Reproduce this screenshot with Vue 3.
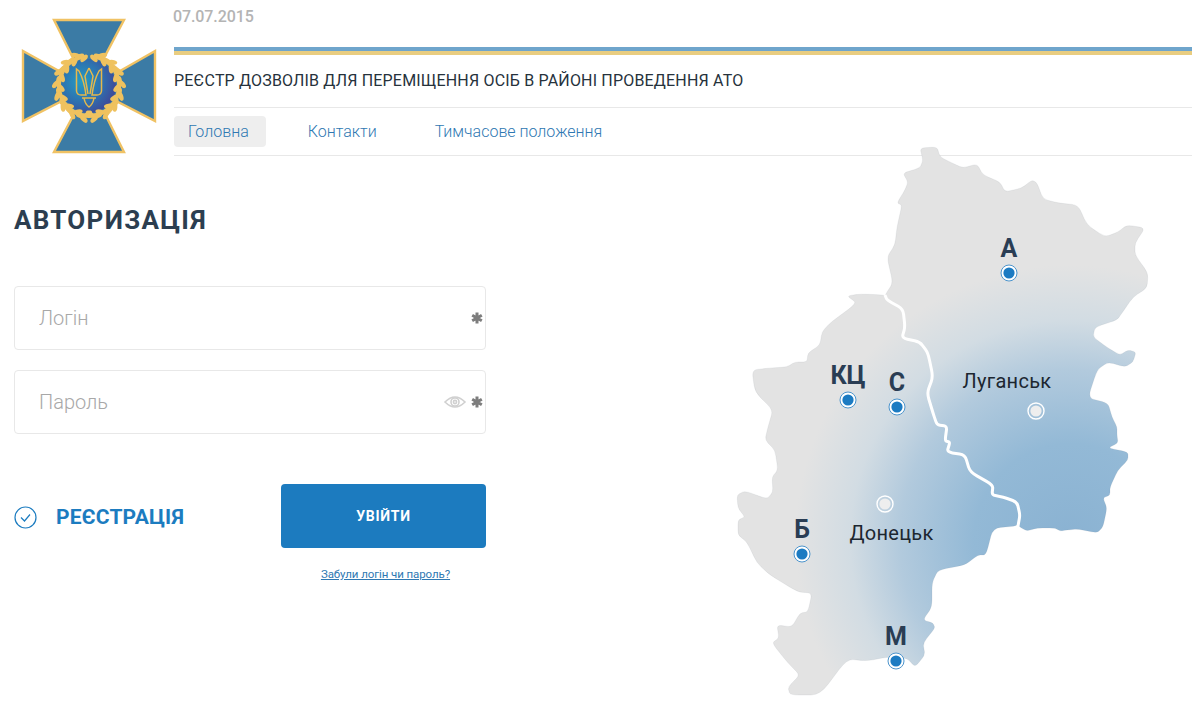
<template>
  <div class="page">
    <header class="top">
      <svg class="logo" viewBox="0 0 174 156" width="174" height="156">
        <defs>
          <radialGradient id="seal" cx="36%" cy="42%" r="72%">
            <stop offset="0" stop-color="#249dc4" />
            <stop offset="0.55" stop-color="#2f6fae" />
            <stop offset="1" stop-color="#433f93" />
          </radialGradient>
        </defs>
        <path class="cross" d="M54 20H124L104 58L120 71L155 51V121L118 102L106 116L124 152H54L73 116L60 102L23 121V51L59 71L73 58Z" />
        <circle cx="89" cy="86" r="27" fill="url(#seal)" />
        <path class="wreath-base" d="M96 56.8A30 30 0 1 1 82 56.8" />
        <ellipse
          v-for="(leaf, i) in wreath"
          :key="i"
          class="leaf"
          :cx="leaf.x"
          :cy="leaf.y"
          rx="4.6"
          ry="2.4"
          :transform="`rotate(${leaf.r} ${leaf.x} ${leaf.y})`"
        />
        <g class="trident">
          <path d="M89 68L85 76L88 94M89 68L93 76L90 94" />
          <path d="M76.5 69L79 71Q84 80 86 95H81Q77 95 76.5 91ZM101.5 69L99 71Q94 80 92 95H97Q101 95 101.5 91Z" />
          <path d="M82 98H96M84 98Q85 104 89 107Q93 104 94 98" />
        </g>
      </svg>
      <div class="top-right">
        <div class="date">07.07.2015</div>
        <div class="stripe"></div>
        <div class="title">РЕЄСТР ДОЗВОЛІВ ДЛЯ ПЕРЕМІЩЕННЯ ОСІБ В РАЙОНІ ПРОВЕДЕННЯ АТО</div>
        <nav class="nav">
          <a class="nav-item active">Головна</a>
          <a class="nav-item">Контакти</a>
          <a class="nav-item">Тимчасове положення</a>
        </nav>
      </div>
    </header>

    <main class="login">
      <h1 class="heading">АВТОРИЗАЦІЯ</h1>
      <div class="fields">
        <label class="field">
          <input type="text" placeholder="Логін" />
          <svg class="star" viewBox="0 0 12 12" width="12" height="12">
            <path d="M6 0.5V11.5M1.2 3.2L10.8 8.8M10.8 3.2L1.2 8.8" />
          </svg>
        </label>
        <label class="field">
          <input type="password" placeholder="Пароль" />
          <svg class="eye" viewBox="0 0 22 14" width="22" height="14">
            <path d="M1 7Q11 -3 21 7Q11 17 1 7Z" />
            <circle cx="11" cy="7" r="4" />
            <circle cx="11" cy="7" r="1.6" />
          </svg>
          <svg class="star" viewBox="0 0 12 12" width="12" height="12">
            <path d="M6 0.5V11.5M1.2 3.2L10.8 8.8M10.8 3.2L1.2 8.8" />
          </svg>
        </label>
      </div>
      <div class="actions">
        <a class="register">
          <svg viewBox="0 0 23 23" width="23" height="23">
            <circle cx="11.5" cy="11.5" r="10.5" />
            <path d="M7 11.5L10.5 15L16 8.5" />
          </svg>
          <span>РЕЄСТРАЦІЯ</span>
        </a>
        <button class="submit" type="button">УВІЙТИ</button>
        <a class="forgot">Забули логін чи пароль?</a>
      </div>
    </main>

    <svg class="map" viewBox="720 140 472 574" width="472" height="574">
      <defs>
        <radialGradient id="shade" gradientUnits="userSpaceOnUse" cx="1070" cy="540" r="275">
          <stop offset="0" stop-color="#8ab2d2" />
          <stop offset="0.35" stop-color="#93b9d6" />
          <stop offset="0.62" stop-color="#b2cadd" />
          <stop offset="0.8" stop-color="#d2dce3" />
          <stop offset="1" stop-color="#e3e3e3" />
        </radialGradient>
      </defs>
      <path class="region" :d="luhansk" />
      <path class="region" :d="donetsk" />
      <path class="border" :d="borderLine" />

      <g v-for="pin in pins" :key="pin.label">
        <circle class="pin-ring" :class="{ city: pin.city }" :cx="pin.x" :cy="pin.y" r="8" />
        <circle class="pin-dot" :class="{ city: pin.city }" :cx="pin.x" :cy="pin.y" r="5.6" />
      </g>
      <text
        v-for="pin in pins"
        :key="'t' + pin.label"
        :class="pin.city ? 'city-name' : 'pin-name'"
        :x="pin.tx"
        :y="pin.ty"
      >{{ pin.label }}</text>
    </svg>
  </div>
</template>

<script setup>
// leaves of the wreath round the seal, open at the top
const wreath = []
for (let side = -1; side <= 1; side += 2) {
  let row = 0
  for (let a = 10; a <= 180; a += 7) {
    const rad = (a * Math.PI) / 180
    const radius = [28, 31, 33.5][row % 3]
    wreath.push({
      x: +(89 + side * radius * Math.sin(rad)).toFixed(1),
      y: +(86 - radius * Math.cos(rad)).toFixed(1),
      r: side * a + [35, 0, -35][row % 3] * side
    })
    row++
  }
}

// shared stretch between the two regions, north to south
const shared = [
  [885, 295], [887, 300], [903, 309], [905, 327], [902, 338], [920, 342], [928, 353], [933, 377],
  [927, 393], [933, 413], [937, 425], [947, 426], [945, 441], [950, 442], [947, 452], [965, 455],
  [970, 472], [993, 485], [992, 495], [1003, 497], [1017, 502], [1020, 515], [1018, 526]
]

const luhanskOuter = [
  [1027, 531], [1037, 528], [1055, 528], [1060, 531], [1067, 530], [1078, 529], [1097, 533], [1103, 527],
  [1107, 508], [1103, 498], [1110, 495], [1110, 487], [1118, 470], [1128, 460], [1128, 452], [1108, 448],
  [1118, 443], [1117, 435], [1117, 427], [1112, 417], [1108, 403], [1088, 398], [1097, 370], [1108, 362],
  [1125, 367], [1133, 362], [1136, 352], [1128, 350], [1120, 355], [1108, 348], [1093, 337], [1095, 327],
  [1117, 320], [1122, 313], [1133, 297], [1147, 288], [1148, 273], [1135, 255], [1135, 243], [1145, 228],
  [1127, 225], [1118, 232], [1105, 237], [1087, 225], [1078, 205], [1058, 203], [1043, 199], [1037, 183],
  [1032, 180], [1022, 188], [1005, 192], [1000, 182], [983, 175], [977, 164], [963, 168], [952, 163],
  [940, 157], [937, 147], [920, 148], [923, 160], [920, 168], [903, 173], [908, 182], [905, 190],
  [897, 203], [902, 205], [897, 227], [895, 245], [887, 257], [893, 283]
]

const donetskOuter = [
  [993, 528], [986, 555], [978, 555], [965, 565], [938, 570], [932, 583], [932, 607], [923, 620],
  [933, 623], [935, 628], [923, 643], [925, 655], [915, 667], [907, 658], [887, 657], [867, 661],
  [847, 659], [820, 695], [790, 695], [788, 687], [800, 675], [788, 663], [772, 643], [779, 638],
  [777, 625], [792, 627], [800, 613], [808, 612], [812, 593], [798, 592], [770, 575], [757, 563],
  [747, 542], [738, 535], [738, 520], [745, 517], [738, 508], [737, 495], [745, 491], [767, 499],
  [773, 492], [772, 477], [778, 470], [775, 450], [765, 440], [768, 427], [773, 410], [755, 392],
  [752, 370], [770, 368], [787, 367], [795, 362], [807, 362], [808, 353], [820, 345], [822, 332],
  [830, 323], [857, 303], [847, 296], [860, 294]
]

// straight edges with slightly rounded corners, like the traced outline of the map
function outline(points, closed = true) {
  const t = 0.3
  const toward = (p, q) => [p[0] + (q[0] - p[0]) * t, p[1] + (q[1] - p[1]) * t]
  const n = points.length
  let d = closed ? '' : `M${points[0]}`
  const from = closed ? 0 : 1
  const to = closed ? n : n - 1
  for (let i = from; i < to; i++) {
    const p = points[i]
    const start = toward(p, points[(i - 1 + n) % n])
    const end = toward(p, points[(i + 1) % n])
    d += `${d ? 'L' : 'M'}${start}Q${p} ${end}`
  }
  return d + (closed ? 'Z' : `L${points[n - 1]}`)
}

const luhansk = outline([...shared, ...luhanskOuter])
const donetsk = outline([...shared, ...donetskOuter])
const borderLine = outline(shared, false)

const pins = [
  { label: 'А', x: 1009, y: 273, tx: 1009, ty: 257 },
  { label: 'КЦ', x: 848, y: 400, tx: 848, ty: 384 },
  { label: 'С', x: 897, y: 407, tx: 897, ty: 391 },
  { label: 'Б', x: 802, y: 554, tx: 802, ty: 538 },
  { label: 'М', x: 896, y: 661, tx: 896, ty: 645 },
  { label: 'Луганськ', x: 1036, y: 411, tx: 1007, ty: 388, city: true },
  { label: 'Донецьк', x: 885, y: 504, tx: 891.5, ty: 540, city: true }
]
</script>

<style>
html,
body {
  margin: 0;
  background: #fff;
  overflow: hidden;
}
</style>

<style scoped>
.page {
  position: relative;
  width: 1192px;
  height: 714px;
  overflow: hidden;
  font-family: Roboto, "Liberation Sans", sans-serif;
  color: #2c3e50;
}

.top {
  display: flex;
}

.logo {
  flex-shrink: 0;
}

.cross {
  fill: #3b7ba5;
  stroke: #f0c264;
  stroke-width: 2.4;
}

.wreath-base {
  fill: none;
  stroke: #efc25f;
  stroke-width: 4;
}

.leaf {
  fill: #efc25f;
}

.trident {
  fill: none;
  stroke: #e6b84c;
  stroke-width: 1.5;
}

.top-right {
  flex: 1;
  min-width: 0;
}

.date {
  height: 47px;
  padding-top: 7px;
  box-sizing: border-box;
  font-size: 16px;
  line-height: 20px;
  font-weight: 500;
  letter-spacing: -0.1px;
  color: #b4b4b4;
  margin-left: -1px;
}

.stripe {
  height: 8px;
  background: linear-gradient(#6fa5cc 50%, #e9cd80 50%);
}

.title {
  height: 53px;
  box-sizing: border-box;
  border-bottom: 1px solid #e8e8e8;
  display: flex;
  align-items: center;
  font-size: 16px;
  padding-bottom: 2px;
  color: #26323c;
  letter-spacing: 0.18px;
}

.nav {
  display: flex;
  height: 48px;
  box-sizing: border-box;
  padding-top: 8px;
  border-bottom: 1px solid #e8e8e8;
}

.nav-item {
  height: 31px;
  line-height: 31px;
  padding: 0 16px 0 14px;
  margin-right: 28px;
  font-size: 16px;
  font-weight: 300;
  color: #2f78b2;
  border-radius: 4px;
}

.nav-item.active {
  padding-right: 17px;
  background: #eeeeee;
}

.login {
  width: 472px;
  margin-left: 14px;
}

.heading {
  margin: 49px 0 51px;
  font-size: 26px;
  line-height: 30px;
  font-weight: 700;
  letter-spacing: 1.3px;
  color: #2c3e50;
}

.fields {
  display: flex;
  flex-direction: column;
  gap: 20px;
}

.field {
  display: flex;
  align-items: center;
  height: 64px;
  box-sizing: border-box;
  padding: 0 2px 0 24px;
  border: 1px solid #e8e8e8;
  border-radius: 4px;
}

.field input {
  flex: 1;
  min-width: 0;
  border: none;
  outline: none;
  background: none;
  padding: 0;
  font-family: inherit;
  font-size: 20px;
  font-weight: 300;
}

.field input::placeholder {
  color: #a8a8a8;
  opacity: 1;
}

.star {
  flex-shrink: 0;
}

.star path {
  fill: none;
  stroke: #7d7d7d;
  stroke-width: 3;
}

.eye {
  flex-shrink: 0;
  margin-right: 5px;
}

.eye path,
.eye circle {
  fill: none;
  stroke: #d0d0d0;
  stroke-width: 1.6;
}

.actions {
  display: grid;
  grid-template-columns: 267px 205px;
  margin-top: 50px;
}

.register {
  display: flex;
  align-items: center;
  gap: 19px;
  padding-top: 2px;
  font-size: 21px;
  font-weight: 700;
  letter-spacing: 0.2px;
  color: #1c7cc0;
}

.register svg {
  flex-shrink: 0;
}

.register circle,
.register path {
  fill: none;
  stroke: #1c7cc0;
  stroke-width: 1.2;
}

.submit {
  height: 64px;
  border: none;
  border-radius: 4px;
  background: #1c7bbf;
  color: #fff;
  font-family: inherit;
  font-size: 14px;
  font-weight: 700;
  letter-spacing: 0.7px;
  padding: 0 0 1px;
}

.forgot {
  grid-column: 2;
  margin-top: 18px;
  text-align: center;
  padding-left: 4px;
  font-size: 11.5px;
  line-height: 16px;
  letter-spacing: -0.08px;
  color: #2f78b2;
  text-decoration: underline;
}

/* the map overlaps the bottom rule of the nav */
.map {
  position: absolute;
  left: 720px;
  top: 140px;
}

.region {
  fill: url(#shade);
  stroke: rgba(120, 130, 140, 0.1);
  stroke-width: 1;
}

.border {
  fill: none;
  stroke: #fff;
  stroke-width: 3;
  stroke-linejoin: round;
}

.pin-ring {
  fill: #fff;
  stroke: #4c94cc;
  stroke-width: 1;
}

.pin-ring.city {
  fill: none;
  stroke: #fff;
  stroke-width: 1.4;
}

.pin-dot {
  fill: #1c7bc2;
}

.pin-dot.city {
  fill: #eeeeee;
}

.pin-name {
  font-size: 25px;
  font-weight: 700;
  fill: #2a3d54;
  text-anchor: middle;
}

.city-name {
  font-size: 20px;
  letter-spacing: 0.3px;
  fill: #1c2630;
  text-anchor: middle;
}
</style>
